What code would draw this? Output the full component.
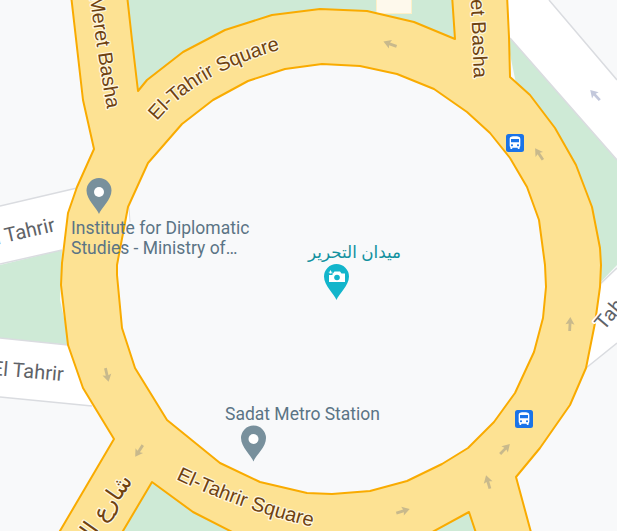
const busPath = "M4 16c0 .88.39 1.67 1 2.22V20c0 .55.45 1 1 1h1c.55 0 1-.45 1-1v-1h8v1c0 .55.45 1 1 1h1c.55 0 1-.45 1-1v-1.78c.61-.55 1-1.34 1-2.22V6c0-3.5-3.58-4-8-4s-8 .5-8 4v10zm3.5 1c-.83 0-1.5-.67-1.5-1.5S6.67 14 7.5 14s1.5.67 1.5 1.5S8.33 17 7.5 17zm9 0c-.83 0-1.5-.67-1.5-1.5s.67-1.5 1.5-1.5 1.5.67 1.5 1.5-.67 1.5-1.5 1.5zm1.5-6H6V6h12v5z";

const arrows = [
  [390, 44, -70, "#c8b98c"],
  [539, 154, -34, "#c8b98c"],
  [595, 95, -43, "#c3c8dc"],
  [570, 324, 3, "#c8b98c"],
  [505, 449, 44, "#c8b98c"],
  [488, 482, -16, "#c8b98c"],
  [403, 511, 73, "#c8b98c"],
  [107, 375, 167, "#c8b98c"],
  [139, 451, -147, "#c8b98c"],
];

const inner = "M322,64 L360,66 L397,74 L434,89 L467,112 L490,133 L510,158 L527,187 L539,220 L545,265 L546,287 L543,318 L534,352 L515,393 L494,422 L468,448 L442,464 L407,481 L370,491 L332,494 L307,493 L260,482 L220,463 L167,420 L135,368 L122,328 L117,275 L117,265 L128,207 L148,163 L182,124 L213,100 L248,81 L285,69 Z";

// ring of the square, outer edge then back round the inner edge
const road =
  "M71,-5 L83,100 L94,149 L77,187 L68,213 L62,263 L61,285 L68,345 L83,388 L114,439 L57,536 L120,536 L152,482 L193,512 L240,536 L425,536 L469,512 L477,536 L532,536 L516,477 L540,448 L570,405 L586,368 L595,323 L600,287 L601,265 L600,248 L592,207 L576,165 L555,128 L530,95 L510,77 L509,37 L507,-5 L452,-5 L455,39 L414,22 L367,11 L320,9 L272,15 L225,30 L183,52 L147,80 L138,91 L132,40 L127,-5 Z " +
  inner;

function Pin({ x, y, color }) {
  return <path d={`M${x},${y + 36} C${x - 2},${y + 30} ${x - 12.5},${y + 22} ${x - 12.5},${y + 12.5} A12.5,12.5 0 1 1 ${x + 12.5},${y + 12.5} C${x + 12.5},${y + 22} ${x + 2},${y + 30} ${x},${y + 36} Z`} fill={color} />;
}

function Bus({ x, y }) {
  return (
    <g transform={`translate(${x} ${y})`}>
      <rect width="18" height="18" rx="2.5" fill="#1a73e8" />
      <path d={busPath} fill="#fff" transform="translate(1 1) scale(0.667)" />
    </g>
  );
}

export default function App() {
  return (
    <div className="relative w-[617px] h-[531px] overflow-hidden bg-[#f8f9fa] font-['Roboto',sans-serif]">
      <svg className="absolute inset-0" width="617" height="531" viewBox="0 0 617 531">
        <defs>
          <path id="topSquare" d="M157,121 Q200,70 290,47" />
          <path id="bottomSquare" d="M176,479 Q240,510 325,530" />
          <path id="leftBasha" d="M86,-30 Q96,45 107,109" />
          <path id="rightBasha" d="M469,-40 Q472,30 474,78" />
        </defs>

        {/* parks */}
        <polygon points="127,0 452,0 455,39 300,120 138,91" fill="#ceead6" />
        <polygon points="0,265 62,250 60,300 70,345 0,338" fill="#ceead6" />
        <polygon points="505,30 617,160 617,265 598,285 540,200" fill="#ceead6" />
        <polygon points="152,482 120,531 230,531 193,512" fill="#ceead6" />
        <polygon points="469,512 430,531 477,531" fill="#ceead6" />
        <rect x="376.500" y="-3" width="35" height="16.500" fill="#fef9ec" stroke="#fdf0c8" strokeWidth="1" />

        {/* side streets */}
        <polygon points="0,206 77,188 130,208 130,240 62,250 0,264" fill="#fff" />
        <path d="M0,206 L77,188" stroke="#dadce0" strokeWidth="1.500" fill="none" />
        <path d="M0,264 L62,250" stroke="#dadce0" strokeWidth="1.500" fill="none" />
        <polygon points="0,338 68,345 92,406 0,397" fill="#fff" />
        <path d="M0,338 L68,345 M0,397 L92,406" stroke="#dadce0" strokeWidth="1.500" fill="none" />
        <polygon points="505,-5 545,-5 617,80 617,160 510,38" fill="#fff" />
        <path d="M549,0 L617,80 M510,38 L617,160" stroke="#dadce0" strokeWidth="1.500" fill="none" />
        <polygon points="600,287 617,268 617,343 586,368" fill="#fff" />
        <path d="M600,284 L617,268 M586,368 L617,343" stroke="#dadce0" strokeWidth="1.500" fill="none" />

        {/* inner circle hides the streets that run under the square */}
        <path d={inner} fill="#f8f9fa" />
        <path d="M126,208 L130,207 L130,222 L124,222 Z" fill="#fff" />
        <path d="M129,207 L130,222" stroke="#dadce0" strokeWidth="1" />
        <path d="M130,358 L135,368 L136,371 Z" fill="#fff" />
        <path d="M131,358 L136,370" stroke="#dadce0" strokeWidth="1" />

        <path d={road} fill="#fde293" stroke="#f9ab00" strokeWidth="2" fillRule="evenodd" strokeLinejoin="round" />

        {arrows.map(([x, y, a, c], i) => (
          <path key={i} d="M0,-7 L4.500,0.500 L1.400,-0.500 L1.400,7 L-1.400,7 L-1.400,-0.500 L-4.500,0.500 Z" fill={c} transform={`translate(${x} ${y}) rotate(${a})`} />
        ))}

        {/* street names */}
        <g fill="#6f4210" stroke="#fef7e0" strokeWidth="2.500" paintOrder="stroke" strokeLinejoin="round" fontSize="20" fontFamily="'Liberation Sans', sans-serif">
          <text><textPath href="#topSquare">El-Tahrir Square</textPath></text>
          <text><textPath href="#bottomSquare">El-Tahrir Square</textPath></text>
          <text textAnchor="end"><textPath href="#leftBasha" startOffset="100%">Meret Basha</textPath></text>
          <text textAnchor="end"><textPath href="#rightBasha" startOffset="100%">Meret Basha</textPath></text>
          <text x="133" y="481" direction="rtl" fontSize="23" transform="rotate(-55 133 481)" fontFamily="'DejaVu Sans', sans-serif">شارع التحرير</text>
        </g>
        <g fill="#5f6368" stroke="#fff" strokeWidth="3" paintOrder="stroke" strokeLinejoin="round" fontSize="20" fontFamily="Roboto, sans-serif">
          <text x="56" y="231" textAnchor="end" transform="rotate(-13 56 231)">El Tahrir</text>
          <text x="63" y="381" textAnchor="end" transform="rotate(5 63 381)">El Tahrir</text>
          <text x="604" y="331" transform="rotate(-50 604 331)">Tahrir</text>
        </g>

        <Pin x={99} y={178} color="#78909c" />
        <circle cx="99" cy="192" r="5" fill="#fff" />
        <Pin x={253.500} y={425.500} color="#78909c" />
        <circle cx="253.500" cy="439" r="5" fill="#fff" />
        <Pin x={336.500} y={264} color="#12b5cb" />
        <path d="M329,273.500 H333 L334.500,271.500 H340 L341.500,273.500 H345 V282 H329 Z" fill="#fff" />
        <circle cx="337" cy="277.500" r="2.800" fill="#12b5cb" />
        <path d="M330.500,270.500 V274 M328.800,272.200 H332.300" stroke="#fff" strokeWidth="1" />
        <path d="M328.500,273.500 H332.500 V275 H328.500 Z" fill="#12b5cb" />

        <Bus x={506} y={134} />
        <Bus x={515} y={410} />
      </svg>

      <div className="absolute left-[71px] top-[218px] text-[17.5px] leading-[20px] text-[#5b7485] whitespace-nowrap">
        <div>Institute for Diplomatic</div>
        <div>Studies - Ministry of…</div>
      </div>
      <div className="absolute left-[225px] top-[404px] text-[17.5px] leading-[20px] text-[#5b7485] whitespace-nowrap">Sadat Metro Station</div>
      <div dir="rtl" className="absolute left-[308px] top-[242px] text-[16.8px] leading-[20px] text-[#11919f] whitespace-nowrap font-['Noto_Sans','DejaVu_Sans',sans-serif]">ميدان التحرير</div>
    </div>
  );
}
